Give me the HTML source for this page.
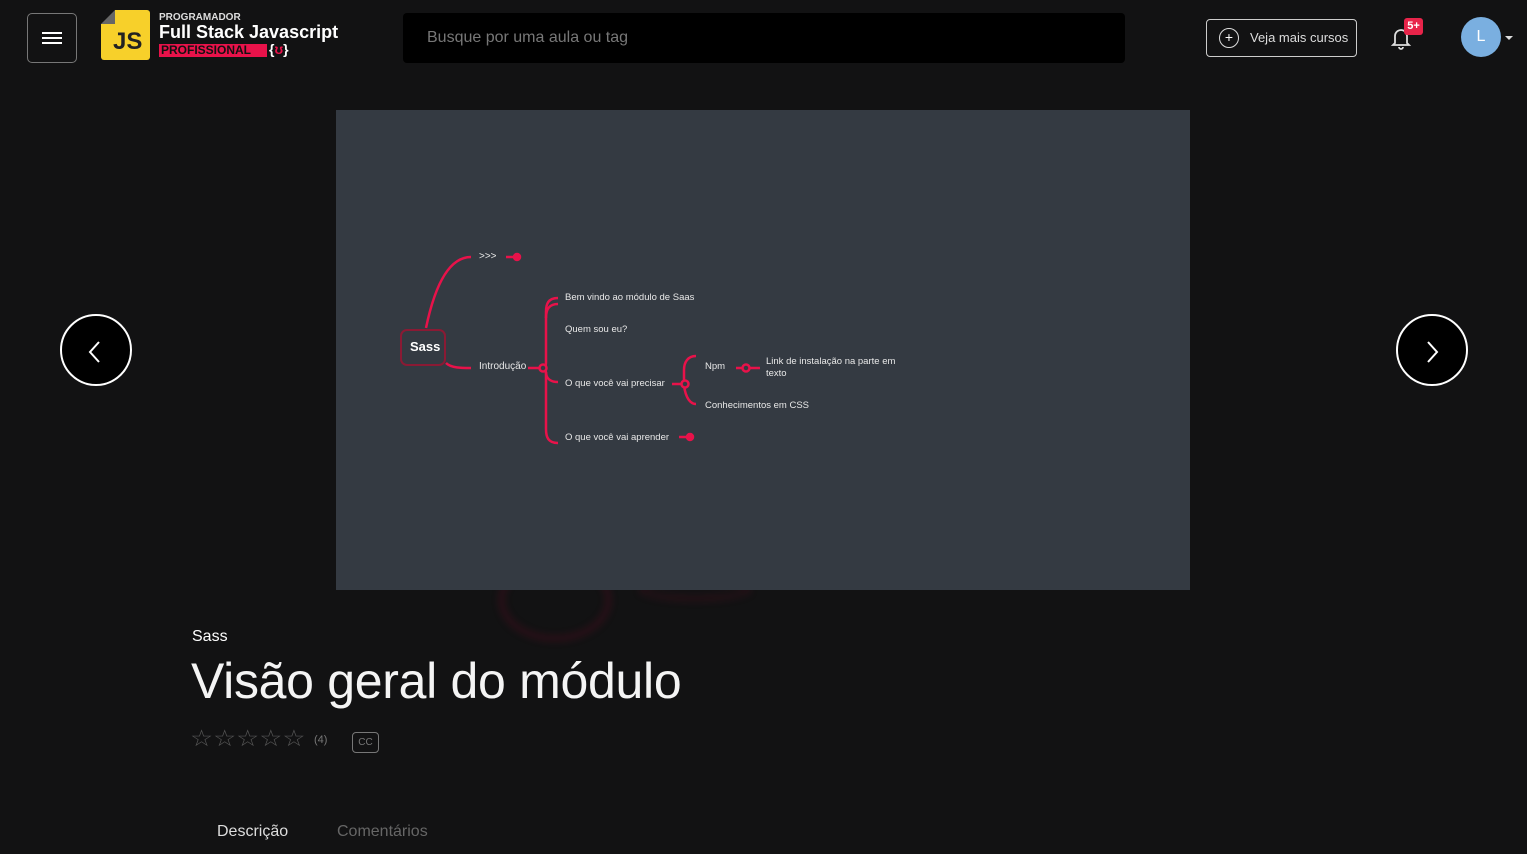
<!DOCTYPE html><html><head><meta charset="utf-8"><style>
*{margin:0;padding:0;box-sizing:border-box}
body{width:1527px;height:854px;background:#121213;font-family:"Liberation Sans",sans-serif;color:#fff;position:relative;overflow:hidden}
.a{position:absolute}
.mm{font-size:10px;color:#e8e8e8;position:absolute;white-space:nowrap}
</style></head><body>
<div class="a" style="left:27px;top:13px;width:50px;height:50px;border:1px solid #777;border-radius:5px"></div>
<div class="a" style="left:42px;top:32px;width:20px;height:2px;background:#fff"></div>
<div class="a" style="left:42px;top:37px;width:20px;height:2px;background:#fff"></div>
<div class="a" style="left:42px;top:42px;width:20px;height:2px;background:#fff"></div>
<div class="a" style="left:101px;top:10px;width:49px;height:50px;background:#f7d02a;border-radius:3px"></div>
<div class="a" style="left:101px;top:10px;width:0;height:0;border-top:14px solid #121213;border-right:14px solid #666"></div>
<div class="a" style="left:113px;top:28px;font-weight:bold;font-size:24px;color:#222">JS</div>
<div class="a" style="left:159px;top:12px;font-size:10px;font-weight:bold;color:#ddd">PROGRAMADOR</div>
<div class="a" style="left:159px;top:22px;font-size:18px;font-weight:bold">Full Stack Javascript</div>
<div class="a" style="left:159px;top:44px;background:#e8124a;color:#111;font-size:12px;font-weight:bold;padding:0 2px;line-height:13px;width:108px">PROFISSIONAL</div>
<div class="a" style="left:269px;top:41px;font-size:14px;font-weight:bold">{<span style="color:#e8124a">ʊ</span>}</div>
<div class="a" style="left:403px;top:13px;width:722px;height:50px;background:#000;border-radius:4px"></div>
<div class="a" style="left:427px;top:29px;font-size:16px;color:#777">Busque por uma aula ou tag</div>
<div class="a" style="left:1206px;top:19px;width:151px;height:38px;border:1px solid #ccc;border-radius:4px"></div>
<div class="a" style="left:1219px;top:28px;width:20px;height:20px;border:1.5px solid #ddd;border-radius:50%;text-align:center;font-size:14px;line-height:17px">+</div>
<div class="a" style="left:1250px;top:30px;font-size:13px;color:#ddd">Veja mais cursos</div>
<svg class="a" style="left:1390px;top:26px" width="22" height="24" viewBox="0 0 22 24"><path d="M5 17V10a6 6 0 0 1 12 0v7l2 2H3z M9 21a2 2 0 0 0 4 0" fill="none" stroke="#ddd" stroke-width="1.8"/></svg>
<div class="a" style="left:1404px;top:18px;width:19px;height:17px;background:#e8244a;border-radius:3px;font-size:11px;font-weight:bold;text-align:center;line-height:17px">5+</div>
<div class="a" style="left:1461px;top:17px;width:40px;height:40px;background:#7aafe0;border-radius:50%;text-align:center;line-height:40px;font-size:16px">L</div>
<div class="a" style="left:1505px;top:36px;border-left:4px solid transparent;border-right:4px solid transparent;border-top:4px solid #ddd"></div>
<div class="a" style="left:500px;top:560px;width:110px;height:80px;border-radius:50%;border:3px solid rgba(120,10,40,.5);filter:blur(4px)"></div>
<div class="a" style="left:640px;top:580px;width:110px;height:20px;border-radius:50%;border:3px solid rgba(120,10,40,.4);filter:blur(4px)"></div>
<div class="a" style="left:336px;top:110px;width:854px;height:480px;background:#343a42"></div>
<svg class="a" style="left:336px;top:110px" width="854" height="480"><g fill="none" stroke="#e8124a" stroke-width="2.5">
<path d="M90 218 C100 170 115 147 135 147"/><path d="M170 147h14"/><circle cx="181" cy="147" r="3" fill="#e8124a"/>
<path d="M110 253 C115 258 125 258 135 258"/><path d="M192 258h16"/>
<path d="M222 188c-10 0-12 6-12 14v50c0 6-2 6-6 6c4 0 6 0 6 6v55c0 8 2 14 12 14"/><path d="M210 208c0-10 4-14 12-14"/><path d="M210 262c0 6 4 10 12 10"/>
<circle cx="207" cy="258" r="3.5" fill="#343a42"/>
<path d="M336 274h10"/><path d="M360 246c-8 0-12 6-12 14v12c0 10 4 22 12 22"/><circle cx="349" cy="274" r="3.5" fill="#343a42"/>
<path d="M400 258h24"/><circle cx="410" cy="258" r="3.5" fill="#343a42"/>
<path d="M343 327h14"/><circle cx="354" cy="327" r="3" fill="#e8124a"/></g>
<rect x="65" y="220" width="44" height="35" rx="6" fill="#343a42" stroke="#8a1a34" stroke-width="2"/></svg>
<div class="a" style="left:410px;top:339px;font-size:13px;font-weight:bold">Sass</div>
<div class="mm" style="left:479px;top:251px">&gt;&gt;&gt;</div>
<div class="mm" style="left:479px;top:361px">Introdução</div>
<div class="mm" style="left:565px;top:292px;font-size:9.5px">Bem vindo ao módulo de Saas</div>
<div class="mm" style="left:565px;top:324px;font-size:9.5px">Quem sou eu?</div>
<div class="mm" style="left:565px;top:378px;font-size:9.5px">O que você vai precisar</div>
<div class="mm" style="left:565px;top:432px;font-size:9.5px">O que você vai aprender</div>
<div class="mm" style="left:705px;top:361px;font-size:9.5px">Npm</div>
<div class="mm" style="left:705px;top:400px;font-size:9.5px">Conhecimentos em CSS</div>
<div class="mm" style="left:766px;top:356px;font-size:9.5px;line-height:12px">Link de instalação na parte em<br>texto</div>
<div class="a" style="left:60px;top:314px;width:72px;height:72px;border:2px solid #fff;border-radius:50%;background:#000"></div>
<svg class="a" style="left:85px;top:340px" width="20" height="24"><path d="M14 2L5 12l9 10" fill="none" stroke="#fff" stroke-width="2"/></svg>
<div class="a" style="left:1396px;top:314px;width:72px;height:72px;border:2px solid #fff;border-radius:50%;background:#000"></div>
<svg class="a" style="left:1422px;top:340px" width="20" height="24"><path d="M6 2l9 10-9 10" fill="none" stroke="#fff" stroke-width="2"/></svg>
<div class="a" style="left:192px;top:628px;font-size:16px">Sass</div>
<div class="a" style="left:191px;top:652px;font-size:50px;letter-spacing:-0.3px;color:#f4f4f4">Visão geral do módulo</div>
<div class="a" style="left:190px;top:725px;font-size:23px;color:#555;letter-spacing:0px;transform:scaleX(1.12);transform-origin:left">☆☆☆☆☆</div>
<div class="a" style="left:314px;top:734px;font-size:11px;color:#777">(4)</div>
<div class="a" style="left:352px;top:732px;width:27px;height:21px;border:1px solid #777;border-radius:4px;font-size:10px;color:#777;text-align:center;line-height:19px">CC</div>
<div class="a" style="left:217px;top:823px;font-size:16px;color:#ddd">Descrição</div>
<div class="a" style="left:337px;top:823px;font-size:16px;color:#666">Comentários</div>
</body></html>
